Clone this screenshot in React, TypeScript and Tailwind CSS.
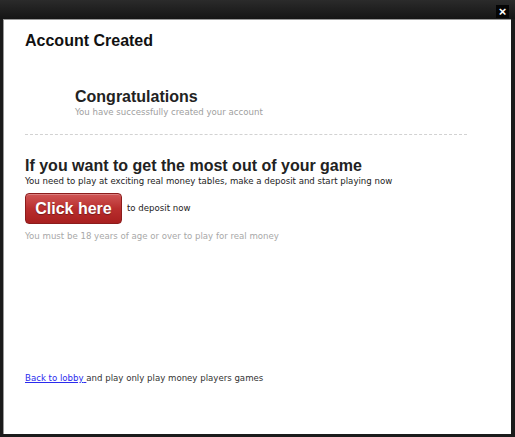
const smallFont = { fontFamily: '"DejaVu Sans", Verdana, sans-serif' };

export default function App() {
  return (
    <div className="flex h-[437px] w-[515px] flex-col bg-[#1b1b1b]">
      <div className="relative h-[19px] shrink-0 bg-gradient-to-b from-[#2b2b2b] to-[#151515]">
        <button
          type="button"
          className="absolute right-[6px] top-[5px] flex h-[13px] w-[13px] items-center justify-center bg-[#050505] text-[13px] font-bold leading-none text-white"
          style={{ fontFamily: 'Arial, "Liberation Sans", sans-serif' }}
        >
          ×
        </button>
      </div>

      <div
        className="mb-[3px] ml-[3px] mr-[4px] flex flex-1 flex-col border-l border-t border-[#9a9a9a] bg-white pl-[21px] pr-[44px] text-[#222]"
        style={{ fontFamily: '"Liberation Sans", Arial, sans-serif' }}
      >
        <h1 className="mt-[12px] text-[16px] font-bold leading-[18px] text-[#111]">Account Created</h1>

        <div className="ml-[50px] mt-[38px]">
          <h2 className="text-[16px] font-bold leading-[18px] text-[#222]">Congratulations</h2>
          <p className="mt-[1px] text-[8.6px] leading-[11px] text-[#a0a0a0]" style={smallFont}>
            You have successfully created your account
          </p>
        </div>

        <div className="mt-[16px] border-t border-dashed border-[#d2d2d2]" />

        <h2 className="mt-[22px] text-[16px] font-bold leading-[18px] text-[#222]">
          If you want to get the most out of your game
        </h2>
        <p className="text-[8.6px] leading-[12px] text-[#222]" style={smallFont}>
          You need to play at exciting real money tables, make a deposit and start playing now
        </p>

        <div className="mt-[6px] flex items-center gap-[5px]">
          <button
            type="button"
            className="flex h-[31px] w-[97px] items-center justify-center rounded-[4px] border border-[#8c1c1c] bg-gradient-to-b from-[#cf5555] via-[#b92e2e] to-[#a81f1f] text-[16px] font-bold text-white shadow-[inset_0_1px_0_rgba(255,255,255,0.25)] [text-shadow:0_1px_1px_rgba(0,0,0,0.35)]"
          >
            Click here
          </button>
          <span className="text-[8.6px] text-[#222]" style={smallFont}>
            to deposit now
          </span>
        </div>

        <p className="mt-[7px] text-[8.6px] leading-[11px] text-[#a8a8a8]" style={smallFont}>
          You must be 18 years of age or over to play for real money
        </p>

        <p className="mt-[131px] text-[8.6px] leading-[11px] text-[#333]" style={smallFont}>
          <a href="#" className="text-[#2a2aee] underline">
            Back to lobby{' '}
          </a>
          and play only play money players games
        </p>
      </div>
    </div>
  );
}
